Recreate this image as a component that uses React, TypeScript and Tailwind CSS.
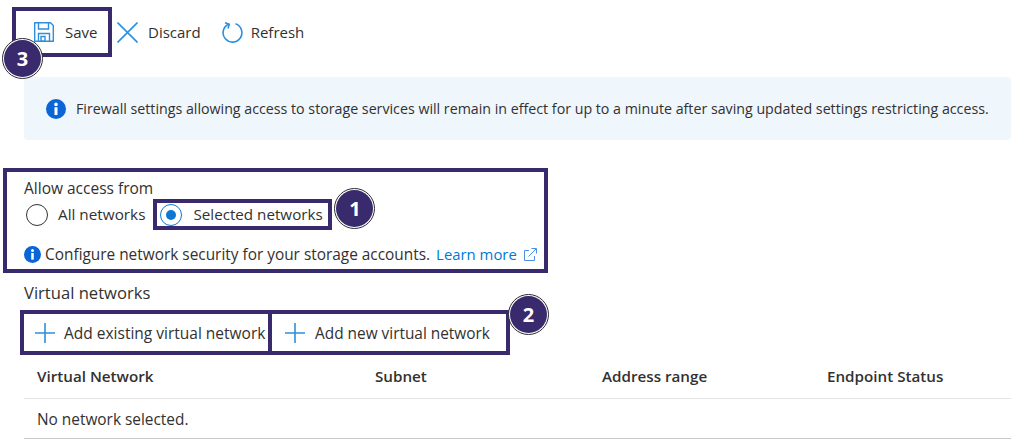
import React from "react";

const Badge = ({ n, className }: { n: string; className: string }) => (
  <div className={`absolute w-[41px] h-[41px] rounded-full border border-[#2a2a2a] bg-white p-px ${className}`}>
    <div className="w-full h-full rounded-full bg-[#392a6e] text-white font-bold text-[20px] flex items-center justify-center">{n}</div>
  </div>
);

const Info = ({ size }: { size: number }) => (
  <svg width={size} height={size} viewBox="0 0 20 20" className="shrink-0">
    <circle cx="10" cy="10" r="10" fill="#0a66d6" />
    <rect x="8.5" y="8.2" width="3" height="7.8" fill="#fff" />
    <circle cx="10" cy="5.4" r="1.8" fill="#fff" />
  </svg>
);

const Plus = () => (
  <svg width="20" height="20" viewBox="0 0 20 20" className="shrink-0">
    <path d="M10 0V20M0 10H20" stroke="#2f8fdf" strokeWidth="1.6" fill="none" />
  </svg>
);

const Radio = ({ checked }: { checked?: boolean }) => (
  <span className={`w-[22px] h-[22px] rounded-full border flex items-center justify-center shrink-0 ${checked ? "border-[#0b78d4]" : "border-[#333]"}`}>
    {checked && <span className="w-[10px] h-[10px] rounded-full bg-[#0b78d4]" />}
  </span>
);

export default function App() {
  return (
    <div className="relative w-[1011px] h-[440px] overflow-hidden bg-white text-[#323130] text-[15.3px] font-['Open_Sans',sans-serif]">
      <div className="flex items-center pt-[7px] pl-3">
        <div className="w-[100px] h-[50px] border-4 border-[#392a6e] flex items-center pl-[18px]">
          <svg width="20" height="20" viewBox="0 0 20 20" fill="none" stroke="#2f8fdf" strokeWidth="1.4" className="shrink-0">
            <path d="M.7.7H16.5L19.3 3.5V19.3H.7Z" />
            <path d="M4.5.7V7H14.5V.7" />
            <path d="M4.5 19.3V11.5H15.5V19.3" />
            <path d="M7 14.5V19.3H11V14.5Z" />
          </svg>
          <span className="ml-[11px] text-[15px]">Save</span>
        </div>
        <div className="flex items-center ml-[5px]">
          <svg width="21" height="21" viewBox="0 0 21 21" className="shrink-0">
            <path d="M.5.5L20.5 20.5M20.5.5L.5 20.5" stroke="#2f8fdf" strokeWidth="1.6" fill="none" />
          </svg>
          <span className="ml-[10px] text-[15px]">Discard</span>
        </div>
        <div className="flex items-center ml-[21px]">
          <svg width="21" height="21" viewBox="0 0 21 21" fill="none" stroke="#2f8fdf" strokeWidth="1.6" className="shrink-0">
            <path d="M6.5 2.2A9.4 9.4 0 1 0 13.5 1.8" />
            <path d="M3 .8L7.3 2.2L6 6.6" />
          </svg>
          <span className="ml-[8px] text-[15px]">Refresh</span>
        </div>
      </div>

      <div className="mt-5 ml-6 h-[63px] bg-[#eff6fc] flex items-center pl-[22px] rounded-sm">
        <Info size={20} />
        <span className="ml-[10px] text-[14.23px] whitespace-nowrap">Firewall settings allowing access to storage services will remain in effect for up to a minute after saving updated settings restricting access.</span>
      </div>

      <div className="mt-7 ml-[3px] w-[545px] h-[105px] border-4 border-[#392a6e] pl-[17px] pt-[6px]">
        <div className="leading-5 text-[15.5px]">Allow access from</div>
        <div className="flex items-center h-[31px] mt-px">
          <div className="flex items-center ml-[2px]">
            <Radio />
            <span className="ml-[10px]">All networks</span>
          </div>
          <div className="relative ml-2 w-[179px] h-[31px] border-4 border-[#392a6e] flex items-center pl-[3px]">
            <Radio checked />
            <span className="ml-[11px] whitespace-nowrap text-[15.2px]">Selected networks</span>
            <Badge n="1" className="left-[177px] -top-[15px]" />
          </div>
        </div>
        <div className="flex items-center mt-[13px]">
          <Info size={17} />
          <span className="ml-1 whitespace-nowrap text-[15.4px]">Configure network security for your storage accounts.</span>
          <span className="ml-[6px] text-[#0078d4] whitespace-nowrap text-[14.9px]">Learn more</span>
          <svg width="13" height="13" viewBox="0 0 13 13" fill="none" stroke="#4a90e2" className="ml-[7px] shrink-0">
            <path d="M5 2.5H.5V12.5H10.5V8" />
            <path d="M4.5 8.5L12 1M7.5.5H12.5V5.5" />
          </svg>
        </div>
      </div>

      <div className="ml-6 mt-[10px] leading-5 text-[16.6px]">Virtual networks</div>

      <div className="relative ml-5 mt-[7px] w-[490px] h-[45px] border-4 border-[#392a6e] flex">
        <div className="w-[248px] flex items-center pl-[11px] border-r-4 border-[#392a6e] shrink-0">
          <Plus />
          <span className="ml-[9px] pt-[2px] whitespace-nowrap text-[15.5px]">Add existing virtual network</span>
        </div>
        <div className="flex items-center pl-[13px]">
          <Plus />
          <span className="ml-[10px] pt-[2px] whitespace-nowrap text-[15.4px]">Add new virtual network</span>
        </div>
        <Badge n="2" className="left-[484px] -top-[20px]" />
      </div>

      <div className="ml-6">
        <div className="grid grid-cols-[338px_227px_225px_1fr] pl-[13px] h-[44px] items-center font-semibold border-b border-[#e5e5e5] text-[15.2px]">
          <span>Virtual Network</span>
          <span>Subnet</span>
          <span>Address range</span>
          <span>Endpoint Status</span>
        </div>
        <div className="h-[40px] pl-[13px] pt-[2px] flex items-center border-b border-[#c8c8c8] text-[15.4px]">No network selected.</div>
      </div>

      <Badge n="3" className="left-[2px] top-[38px]" />
    </div>
  );
}
